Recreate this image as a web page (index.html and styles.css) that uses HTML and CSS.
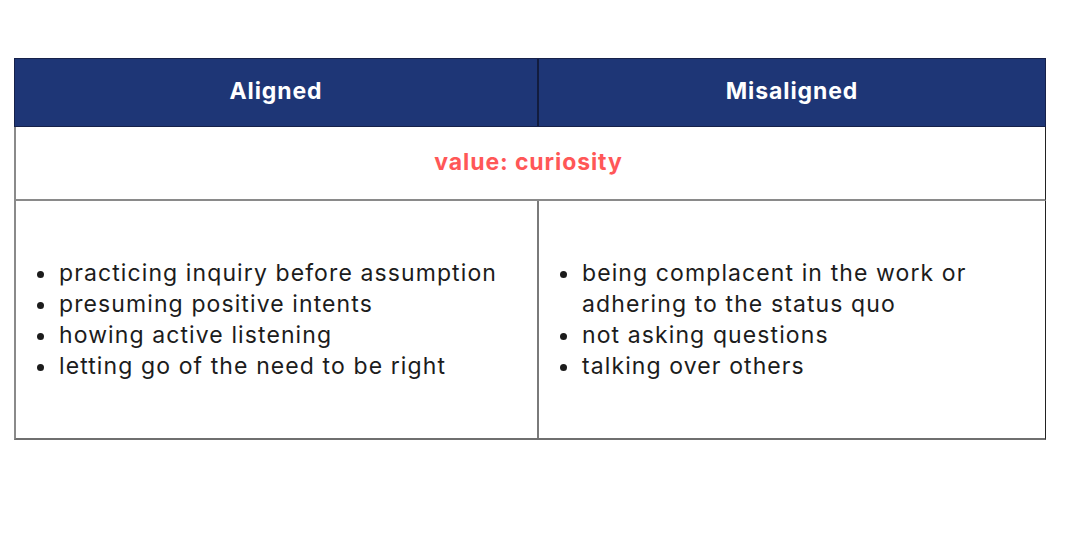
FILE: index.html
```html
<!DOCTYPE html>
<html>
<head>
<meta charset="utf-8">
<link rel="stylesheet" href="styles.css">
</head>
<body>
<div class="table">
  <div class="head-row">
    <div class="head-cell">Aligned</div>
    <div class="head-cell head-right">Misaligned</div>
  </div>
  <div class="value-row">value: curiosity</div>
  <div class="body-row">
    <div class="body-cell">
      <ul class="list">
        <li>practicing inquiry before assumption</li>
        <li>presuming positive intents</li>
        <li>howing active listening</li>
        <li>letting go of the need to be right</li>
      </ul>
    </div>
    <div class="body-cell body-right">
      <ul class="list">
        <li>being complacent in the work or adhering to the status quo</li>
        <li>not asking questions</li>
        <li>talking over others</li>
      </ul>
    </div>
  </div>
</div>
</body>
</html>
```
FILE: styles.css
```css
html, body {
  margin: 0;
  padding: 0;
  background: #ffffff;
}
body {
  font-family: "Inter", "Liberation Sans", sans-serif;
  color: #1c1c1c;
}
.table {
  margin: 58px 0 0 14px;
  width: 1032px;
  box-sizing: border-box;
}
.head-row {
  display: grid;
  grid-template-columns: 522px 1fr;
  height: 69px;
  background: #1e3676;
  border: 1px solid #16214a;
  box-sizing: border-box;
}
.head-cell {
  display: flex;
  align-items: center;
  justify-content: center;
  color: #ffffff;
  font-weight: 700;
  font-size: 23px;
  letter-spacing: 0.9px;
  padding-bottom: 3px;
}
.head-right {
  border-left: 2px solid #121c3e;
}
.value-row {
  height: 74px;
  box-sizing: border-box;
  border-left: 2px solid #8a8a8a;
  border-right: 1px solid #222;
  border-bottom: 2px solid #8a8a8a;
  display: flex;
  align-items: center;
  justify-content: center;
  color: #ff5757;
  font-weight: 700;
  font-size: 23px;
  letter-spacing: 0.9px;
  padding-bottom: 2px;
  padding-right: 4px;
}
.body-row {
  display: grid;
  grid-template-columns: 521px 1fr;
  height: 239px;
  box-sizing: border-box;
  border-left: 2px solid #8a8a8a;
  border-right: 1px solid #222;
  border-bottom: 2px solid #6f6f6f;
}
.body-cell {
  display: flex;
  align-items: center;
}
.body-right {
  border-left: 2px solid #7a7a7a;
}
.list {
  margin: 0;
  padding: 0 0 0 42px;
  font-size: 23px;
  line-height: 31px;
  letter-spacing: 1.1px;
  list-style: disc;
}
.body-right .list {
  padding-left: 42px;
  padding-right: 40px;
}
.list li {
  padding-left: 1px;
}
```
